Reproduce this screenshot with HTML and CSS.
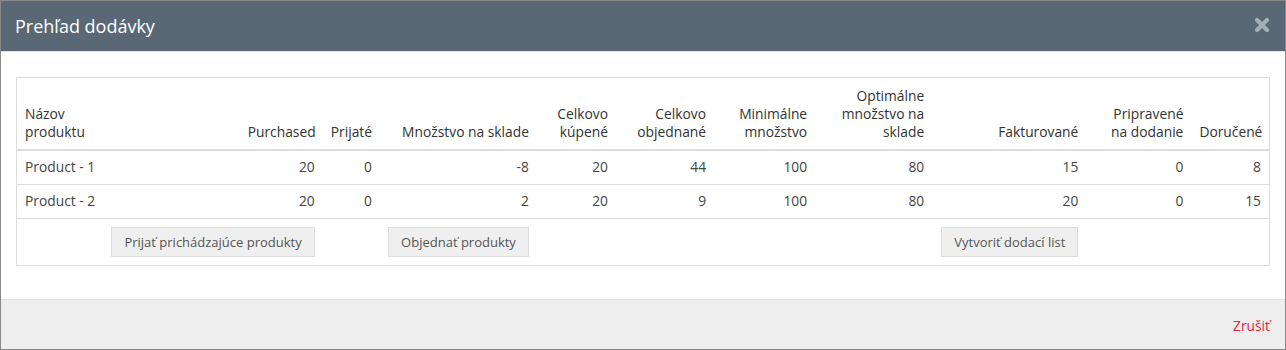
FILE: index.html
```html
<!DOCTYPE html>
<html lang="sk">
<head>
	<meta charset="UTF-8">
	<title>Prehľad dodávky</title>
	<link rel="stylesheet" href="styles.css">
</head>
<body>
	<div class="modal">
		<div class="modal-header">
			<h4 class="modal-title">Prehľad dodávky</h4>
			<span class="close">
				<svg width="16" height="16" viewBox="0 0 16 16"><path d="M3 3L13 13M13 3L3 13" stroke="#a3aeb8" stroke-width="4.2" stroke-linecap="round"/></svg>
			</span>
		</div>
		<div class="modal-body">
			<table class="grid">
				<colgroup>
					<col style="width:223px"><col style="width:83px"><col style="width:57px"><col style="width:157px">
					<col style="width:79px"><col style="width:98px"><col style="width:101px"><col style="width:117px">
					<col style="width:154px"><col style="width:105px"><col style="width:78px">
				</colgroup>
				<thead>
					<tr>
						<th class="left">Názov<br>produktu</th>
						<th>Purchased</th>
						<th>Prijaté</th>
						<th>Množstvo na sklade</th>
						<th>Celkovo<br>kúpené</th>
						<th>Celkovo<br>objednané</th>
						<th>Minimálne<br>množstvo</th>
						<th>Optimálne<br>množstvo na<br>sklade</th>
						<th>Fakturované</th>
						<th>Pripravené<br>na dodanie</th>
						<th>Doručené</th>
					</tr>
				</thead>
				<tbody>
					<tr>
						<td class="left">Product - 1</td>
						<td>20</td><td>0</td><td>-8</td><td>20</td><td>44</td><td>100</td><td>80</td><td>15</td><td>0</td><td>8</td>
					</tr>
					<tr>
						<td class="left">Product - 2</td>
						<td>20</td><td>0</td><td>2</td><td>20</td><td>9</td><td>100</td><td>80</td><td>20</td><td>0</td><td>15</td>
					</tr>
					<tr class="actions">
						<td colspan="2"><button class="btn">Prijať prichádzajúce produkty</button></td>
						<td colspan="2"><button class="btn">Objednať produkty</button></td>
						<td colspan="5"><button class="btn">Vytvoriť dodací list</button></td>
						<td colspan="2"></td>
					</tr>
				</tbody>
			</table>
		</div>
		<div class="modal-footer">
			<a class="cancel">Zrušiť</a>
		</div>
	</div>
</body>
</html>
```

FILE: styles.css
```css
body {
	margin: 0;
	background-color: #888;
	font-family: "Open Sans", "Liberation Sans", sans-serif;
	font-size: 13.8px;
	line-height: 18px;
	color: #333;
}
.modal {
	width: 1284px;
	height: 348px;
	border: 1px solid #888;
	background-color: #fff;
	display: flex;
	flex-direction: column;
}
.modal-header {
	height: 50px;
	background-color: #5a6875;
	border-bottom: 1px solid #dfe5ea;
	display: flex;
	align-items: center;
	justify-content: space-between;
	padding: 0 15px 0 14px;
}
.modal-title {
	margin: 0;
	font-size: 18px;
	font-weight: normal;
	color: #fff;
	padding-bottom: 1px;
}
.close {
	display: flex;
	padding-bottom: 2px;
}
.modal-body {
	flex: 1;
	padding: 25px 15px 0 15px;
}
.grid {
	width: 1254px;
	table-layout: fixed;
	border-collapse: collapse;
	border: 1px solid #ddd;
}
.grid th, .grid td {
	padding: 8px;
	text-align: right;
	white-space: nowrap;
}
.grid th {
	font-weight: normal;
	vertical-align: bottom;
	border-bottom: 2px solid #ddd;
	padding-top: 9px;
}
.grid td {
	border-top: 1px solid #ddd;
	vertical-align: top;
	padding-top: 7px;
	color: #444;
}
.grid .actions td {
	padding-top: 8px;
}
.grid .left {
	text-align: left;
}
.btn {
	font-family: inherit;
	font-size: 13px;
	line-height: 18px;
	color: #555;
	background-color: #efefef;
	border: 1px solid #ddd;
	border-radius: 0;
	padding: 5px 12px;
	margin: 0;
}
.modal-footer {
	height: 49px;
	background-color: #eee;
	border-top: 1px solid #e3e3e3;
	display: flex;
	align-items: center;
	justify-content: flex-end;
	padding: 0 15px 0 0;
}
.cancel {
	color: #f0203a;
	padding-top: 2px;
}
```
